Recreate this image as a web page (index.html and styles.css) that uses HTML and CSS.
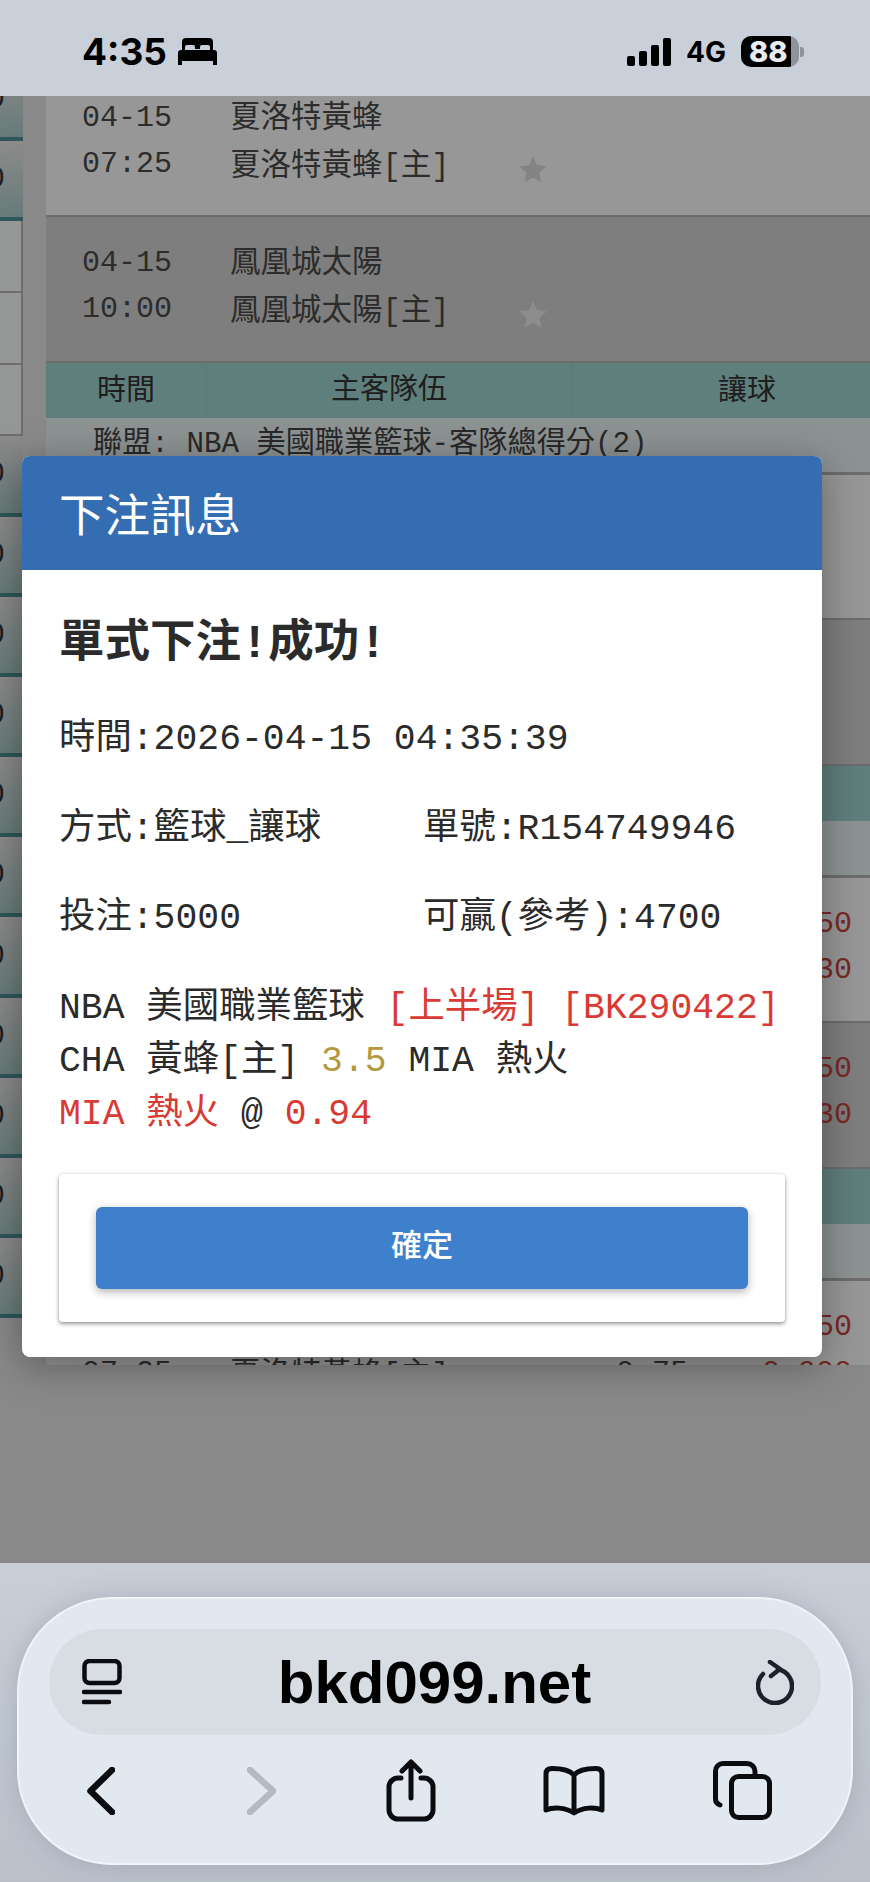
FILE: index.html
```html
<!DOCTYPE html>
<html>
<head>
    <title>bkd099.net</title>
    <link rel="stylesheet" href="styles.css">
</head>
<body>
    <div class="phone">
        <div class="status-bar">
            <div class="clock">4:35</div>
            <svg class="bed" viewBox="0 0 39 27"><path d="M4 12V4a4 4 0 0 1 4-4h23a4 4 0 0 1 4 4v8h-3V9a2 2 0 0 0-2-2h-6a2 2 0 0 0-2 2v2h-5V9a2 2 0 0 0-2-2H9a2 2 0 0 0-2 2v3z"/><path d="M0 15a3 3 0 0 1 3-3h33a3 3 0 0 1 3 3v12h-4v-4H4v4H0z"/></svg>
            <div class="status-right">
                <div class="signal">
                    <span class="bar bar-1"></span>
                    <span class="bar bar-2"></span>
                    <span class="bar bar-3"></span>
                    <span class="bar bar-4"></span>
                </div>
                <div class="network">4G</div>
                <div class="battery">88</div>
                <div class="battery-nub"></div>
            </div>
        </div>

        <div class="page">
            <div class="side">
                <div class="side-row side-first"><span>0</span></div>
                <div class="side-row"><span>0</span></div>
                <div class="side-white"></div>
                <div class="side-white"></div>
                <div class="side-white"></div>
                <div class="side-row"><span>0</span></div>
                <div class="side-row"><span>0</span></div>
                <div class="side-row"><span>0</span></div>
                <div class="side-row"><span>0</span></div>
                <div class="side-row"><span>0</span></div>
                <div class="side-row"><span>0</span></div>
                <div class="side-row"><span>0</span></div>
                <div class="side-row"><span>0</span></div>
                <div class="side-row"><span>0</span></div>
                <div class="side-row"><span>0</span></div>
                <div class="side-row"><span>0</span></div>
            </div>

            <div class="list">
                <div class="game game-first">
                    <div class="game-time">04-15<br>07:25</div>
                    <div class="game-team">夏洛特黃蜂<br>夏洛特黃蜂[主]</div>
                    <svg class="star" viewBox="0 0 24 24"><path d="M12 1l3.2 7.2 7.8.8-5.900 5.200 1.700 7.700L12 18.100 5.200 22l1.700-7.700L1 9l7.800-.8z"/></svg>
                </div>
                <div class="game game-dark">
                    <div class="game-time">04-15<br>10:00</div>
                    <div class="game-team">鳳凰城太陽<br>鳳凰城太陽[主]</div>
                    <svg class="star star-light" viewBox="0 0 24 24"><path d="M12 1l3.2 7.2 7.8.8-5.900 5.200 1.700 7.700L12 18.100 5.200 22l1.700-7.700L1 9l7.800-.8z"/></svg>
                </div>

                <div class="list-head">
                    <div class="head-time">時間</div>
                    <div class="head-team">主客隊伍</div>
                    <div class="head-odds">讓球</div>
                </div>
                <div class="league">聯盟: NBA 美國職業籃球-客隊總得分(2)</div>
                <div class="game">
                    <div class="game-time">04-15<br>07:25</div>
                    <div class="game-team">夏洛特黃蜂<br>夏洛特黃蜂[主]</div>
                </div>
                <div class="game game-dark">
                    <div class="game-time">04-15<br>10:00</div>
                    <div class="game-team">鳳凰城太陽<br>鳳凰城太陽[主]</div>
                </div>

                <div class="list-head">
                    <div class="head-time">時間</div>
                    <div class="head-team">主客隊伍</div>
                    <div class="head-odds">讓球</div>
                </div>
                <div class="league">聯盟: NBA 美國職業籃球-主隊總得分(2)</div>
                <div class="game">
                    <div class="game-time">04-15<br>07:25</div>
                    <div class="game-team">夏洛特黃蜂<br>夏洛特黃蜂[主]</div>
                    <div class="game-line"><br>0.75</div>
                    <div class="game-odds">0.850<br>0.830</div>
                </div>
                <div class="game game-dark">
                    <div class="game-time">04-15<br>10:00</div>
                    <div class="game-team">鳳凰城太陽<br>鳳凰城太陽[主]</div>
                    <div class="game-line"><br>0.75</div>
                    <div class="game-odds">0.850<br>0.830</div>
                </div>

                <div class="list-head">
                    <div class="head-time">時間</div>
                    <div class="head-team">主客隊伍</div>
                    <div class="head-odds">讓球</div>
                </div>
                <div class="league">聯盟: NBA 美國職業籃球-全場</div>
                <div class="game">
                    <div class="game-time">04-15<br>07:25</div>
                    <div class="game-team">夏洛特黃蜂<br>夏洛特黃蜂[主]</div>
                    <div class="game-line"><br>0.75</div>
                    <div class="game-odds">0.850<br>0.900</div>
                </div>
            </div>

            <div class="overlay"></div>

            <div class="modal">
                <div class="modal-head">下注訊息</div>
                <div class="modal-body">
                    <div class="modal-title">單式下注!成功!</div>
                    <div class="info-row">時間:2026-04-15 04:35:39</div>
                    <div class="info-row info-cols">
                        <div>方式:籃球_讓球</div>
                        <div>單號:R154749946</div>
                    </div>
                    <div class="info-row info-cols">
                        <div>投注:5000</div>
                        <div>可贏(參考):4700</div>
                    </div>
                    <div class="bet">
                        NBA 美國職業籃球 <span class="red">[上半場] [BK290422]</span><br>
                        CHA 黃蜂[主] <span class="gold">3.5</span> MIA 熱火<br>
                        <span class="red">MIA 熱火</span> @ <span class="red">0.94</span>
                    </div>
                    <div class="confirm-card">
                        <button class="confirm-btn">確定</button>
                    </div>
                </div>
            </div>
        </div>

        <div class="toolbar">
            <div class="pill">
                <div class="address">
                    <svg class="reader" viewBox="0 0 40 46"><rect x="2.500" y="2" width="35" height="22" rx="5"/><path d="M2 33h36M2 43h25"/></svg>
                    <div class="url">bkd099.net</div>
                    <svg class="reload" viewBox="0 0 38 45"><path d="M22 9.300a17 17 0 1 1-15 4.700"/><path d="M14 2l10 7-9 7"/></svg>
                </div>
                <div class="nav">
                    <svg class="nav-back" viewBox="0 0 28 48"><path d="M25 3L3.500 24 25 45"/></svg>
                    <svg class="nav-forward" viewBox="0 0 29 48"><path d="M3 3l23 21L3 45"/></svg>
                    <svg class="nav-share" viewBox="0 0 50 63"><path d="M15 19h-3a9 9 0 0 0-9 9v23a9 9 0 0 0 9 9h26a9 9 0 0 0 9-9V28a9 9 0 0 0-9-9h-3"/><path d="M25 4v35M16 12l9-9 9 9"/></svg>
                    <svg class="nav-book" viewBox="0 0 62 50"><path d="M31 9C26 3 16 2.500 9 2.500 5 2.500 3 4.500 3 8v36c7-3 19-3 28 3 9-6 21-6 28-3V8c0-3.500-2-5.500-6-5.500-7 0-17 .5-22 6.500zM31 9v35"/></svg>
                    <svg class="nav-tabs" viewBox="0 0 59 59"><path d="M7 44c-3-1-4.500-3-4.500-6V10A7.500 7.500 0 0 1 10 2.500h24a8 8 0 0 1 8 8v2"/><rect x="18.500" y="15.500" width="38" height="41" rx="7"/></svg>
                </div>
            </div>
        </div>
    </div>
</body>
</html>
```

FILE: styles.css
```css
body, html {
    margin: 0;
    padding: 0;
    background: #c9d0da;
}

.phone {
    width: 870px;
    height: 1882px;
    display: flex;
    flex-direction: column;
    overflow: hidden;
    font-family: "Liberation Mono", "Noto Sans CJK TC", monospace;
}

/* status bar */
.status-bar {
    height: 96px;
    flex: none;
    display: flex;
    align-items: center;
    padding: 0 66px 0 82px;
    box-sizing: border-box;
    background: #c9d0da;
    color: #000;
    font-family: Inter, "Liberation Sans", sans-serif;
}

.clock {
    font-size: 37px;
    font-weight: 700;
    line-height: 40px;
    margin-top: 8px;
}

.bed {
    width: 39px;
    height: 27px;
    margin-left: 11px;
    margin-top: 7px;
    fill: #000;
}

.status-right {
    margin-left: auto;
    display: flex;
    align-items: center;
    margin-top: 7px;
}

.signal {
    display: flex;
    align-items: flex-end;
    gap: 4px;
    height: 28px;
}

.bar {
    width: 8px;
    background: #000;
    border-radius: 2px;
}

.bar-1 { height: 10px; }
.bar-2 { height: 15px; }
.bar-3 { height: 21px; }
.bar-4 { height: 28px; }

.network {
    font-size: 28px;
    font-weight: 700;
    margin-left: 15px;
    width: 55px;
}

.battery {
    width: 58px;
    height: 31px;
    border-radius: 10px;
    background: linear-gradient(90deg, #000 86%, #8e9299 86%);
    color: #e8ebef;
    font-size: 29px;
    font-weight: 800;
    line-height: 31px;
    padding-left: 8px;
    box-sizing: border-box;
}

.battery-nub {
    width: 4px;
    height: 10px;
    margin-left: 1px;
    background: #8e9299;
    border-radius: 0 3px 3px 0;
}

/* page behind the dialog */
.page {
    flex: 1;
    position: relative;
    display: flex;
    align-items: flex-start;
    overflow: hidden;
    background: #e6e5e5;
}

.side {
    width: 46px;
    flex: none;
    height: 1222px;
    overflow: hidden;
}

.side-row {
    width: 23px;
    height: 80.2px;
    box-sizing: border-box;
    display: flex;
    align-items: center;
    justify-content: flex-end;
    padding-right: 18px;
    overflow: hidden;
    background: linear-gradient(170deg, #ece8e8 0%, #a9cdc9 100%);
    border-bottom: 4px solid #4f8f96;
    color: #333;
    font-size: 30px;
}

.side-first {
    margin-top: -35px;
}

.side-white {
    width: 23px;
    height: 71.67px;
    box-sizing: border-box;
    background: #f9fbfb;
    border-right: 2px solid #b8b8b8;
    border-bottom: 2px solid #b8b8b8;
}

.list {
    flex: 1;
    height: 1269px;
    overflow: hidden;
    color: #4a4a4a;
    font-size: 30.5px;
}

.game {
    height: 145px;
    box-sizing: border-box;
    display: flex;
    align-items: flex-start;
    padding: 23px 0 0 36px;
    background: #fcfcfc;
    border-bottom: 2px solid #b4b4b4;
}

.game-first {
    height: 146px;
    margin-top: -25px;
    padding-top: 24px;
}

.game-dark {
    height: 146px;
    background: #d3d3d3;
}

.game-time {
    width: 148px;
    flex: none;
    line-height: 46px;
    font-size: 30px;
}

.game-team {
    width: 288px;
    flex: none;
    line-height: 48px;
    white-space: nowrap;
}

.star {
    width: 30px;
    height: 30px;
    margin-top: 60px;
    flex: none;
    fill: #dcdcdc;
}

.star-light {
    fill: #ececec;
}

.game-line {
    margin-left: 98px;
    width: 146px;
    flex: none;
    line-height: 46px;
    font-size: 30px;
}

.game-odds {
    line-height: 46px;
    font-size: 30px;
    color: #c9443c;
}

.list-head {
    height: 55px;
    display: flex;
    align-items: center;
    background: #9fd4cf;
    color: #333;
    font-family: "Noto Sans CJK TC", sans-serif;
    font-size: 29px;
    text-align: center;
}

.head-time {
    width: 160px;
    flex: none;
    padding-bottom: 8px;
}

.head-team {
    width: 364px;
    flex: none;
    align-self: stretch;
    line-height: 47px;
    border-left: 1px solid #97cac5;
    border-right: 1px solid #97cac5;
}

.head-odds {
    width: 350px;
    flex: none;
    padding-bottom: 8px;
}

.league {
    height: 57px;
    box-sizing: border-box;
    line-height: 53px;
    padding-left: 47px;
    background: #ecf4f4;
    border-bottom: 3px solid #b4b4b4;
    font-size: 29.2px;
    color: #444;
    white-space: nowrap;
}

.overlay {
    position: absolute;
    top: 0;
    left: 0;
    right: 0;
    bottom: 0;
    background: rgba(0, 0, 0, 0.4);
}

/* dialog */
.modal {
    position: absolute;
    top: 360px;
    left: 22px;
    width: 800px;
    height: 901px;
    background: #fff;
    border-radius: 8px;
    box-shadow: 0 8px 40px rgba(0, 0, 0, 0.35);
    overflow: hidden;
}

.modal-head {
    height: 114px;
    box-sizing: border-box;
    padding-left: 37px;
    background: #346db2;
    color: #fff;
    font-family: "Noto Sans CJK TC", sans-serif;
    font-size: 45.5px;
    line-height: 112px;
}

.modal-body {
    padding: 45px 37px 0 37px;
    color: #2b2b2b;
    font-size: 36.4px;
}

.modal-title {
    font-size: 45.5px;
    font-weight: 700;
    line-height: 60px;
    margin-bottom: 38px;
}

.info-row {
    line-height: 54px;
    margin-bottom: 35.5px;
    white-space: nowrap;
}

.info-cols {
    display: flex;
}

.info-cols div:first-child {
    width: 364px;
    flex: none;
}

.bet {
    line-height: 53px;
    white-space: nowrap;
    margin-bottom: 33.5px;
}

.red {
    color: #d93a33;
}

.gold {
    color: #b39a3f;
}

.confirm-card {
    padding: 33px 37px;
    background: #fff;
    border-radius: 4px;
    box-shadow: 0 2px 4px rgba(0, 0, 0, 0.4), 0 0 3px rgba(0, 0, 0, 0.08);
}

.confirm-btn {
    display: block;
    width: 100%;
    height: 82px;
    padding: 0 0 12px;
    border: none;
    border-radius: 6px;
    background: #3f80cc;
    color: #fff;
    font-family: "Noto Sans CJK TC", sans-serif;
    font-size: 31px;
    font-weight: 500;
    box-shadow: 0 3px 8px rgba(0, 0, 0, 0.3);
}

/* browser toolbar */
.toolbar {
    height: 319px;
    flex: none;
    box-sizing: border-box;
    padding: 34px 17px 0;
    background: linear-gradient(180deg, #c8cfd8 0%, #bac1cb 100%);
}

.pill {
    height: 268px;
    box-sizing: border-box;
    padding: 30px 30px 0;
    border: 2px solid #f0f4f8;
    border-radius: 95px;
    background: #e2e8f0;
    box-shadow: 0 0 24px rgba(90, 100, 115, 0.25);
}

.address {
    height: 106px;
    display: flex;
    align-items: center;
    justify-content: space-between;
    padding: 0 27px 0 33px;
    border-radius: 53px;
    background: #d8dde4;
    color: #000;
}

.url {
    font-family: "Liberation Sans", sans-serif;
    font-size: 60px;
    font-weight: 700;
    margin-left: -9px;
}

.reader {
    width: 40px;
    height: 46px;
    fill: none;
    stroke: #0a0c10;
    stroke-width: 4.500;
    stroke-linecap: round;
}

.reload {
    width: 38px;
    height: 45px;
    fill: none;
    stroke: #1c222b;
    stroke-width: 4.500;
    stroke-linecap: round;
    stroke-linejoin: round;
}

.nav {
    display: flex;
    align-items: center;
    margin-top: 24px;
    padding-left: 38px;
    height: 63px;
}

.nav svg {
    flex: none;
    fill: none;
    stroke: #0a0c10;
    stroke-width: 5;
    stroke-linecap: round;
    stroke-linejoin: round;
}

.nav .nav-back {
    width: 28px;
    height: 48px;
    margin-right: 132px;
    stroke-width: 6.500;
}

.nav .nav-forward {
    width: 29px;
    height: 48px;
    margin-right: 110px;
    stroke: #b4bac3;
    stroke-width: 6.500;
}

.nav-share {
    width: 50px;
    height: 63px;
    margin-right: 107px;
}

.nav-book {
    width: 62px;
    height: 50px;
    margin-right: 108px;
}

.nav-tabs {
    width: 59px;
    height: 59px;
}
```
